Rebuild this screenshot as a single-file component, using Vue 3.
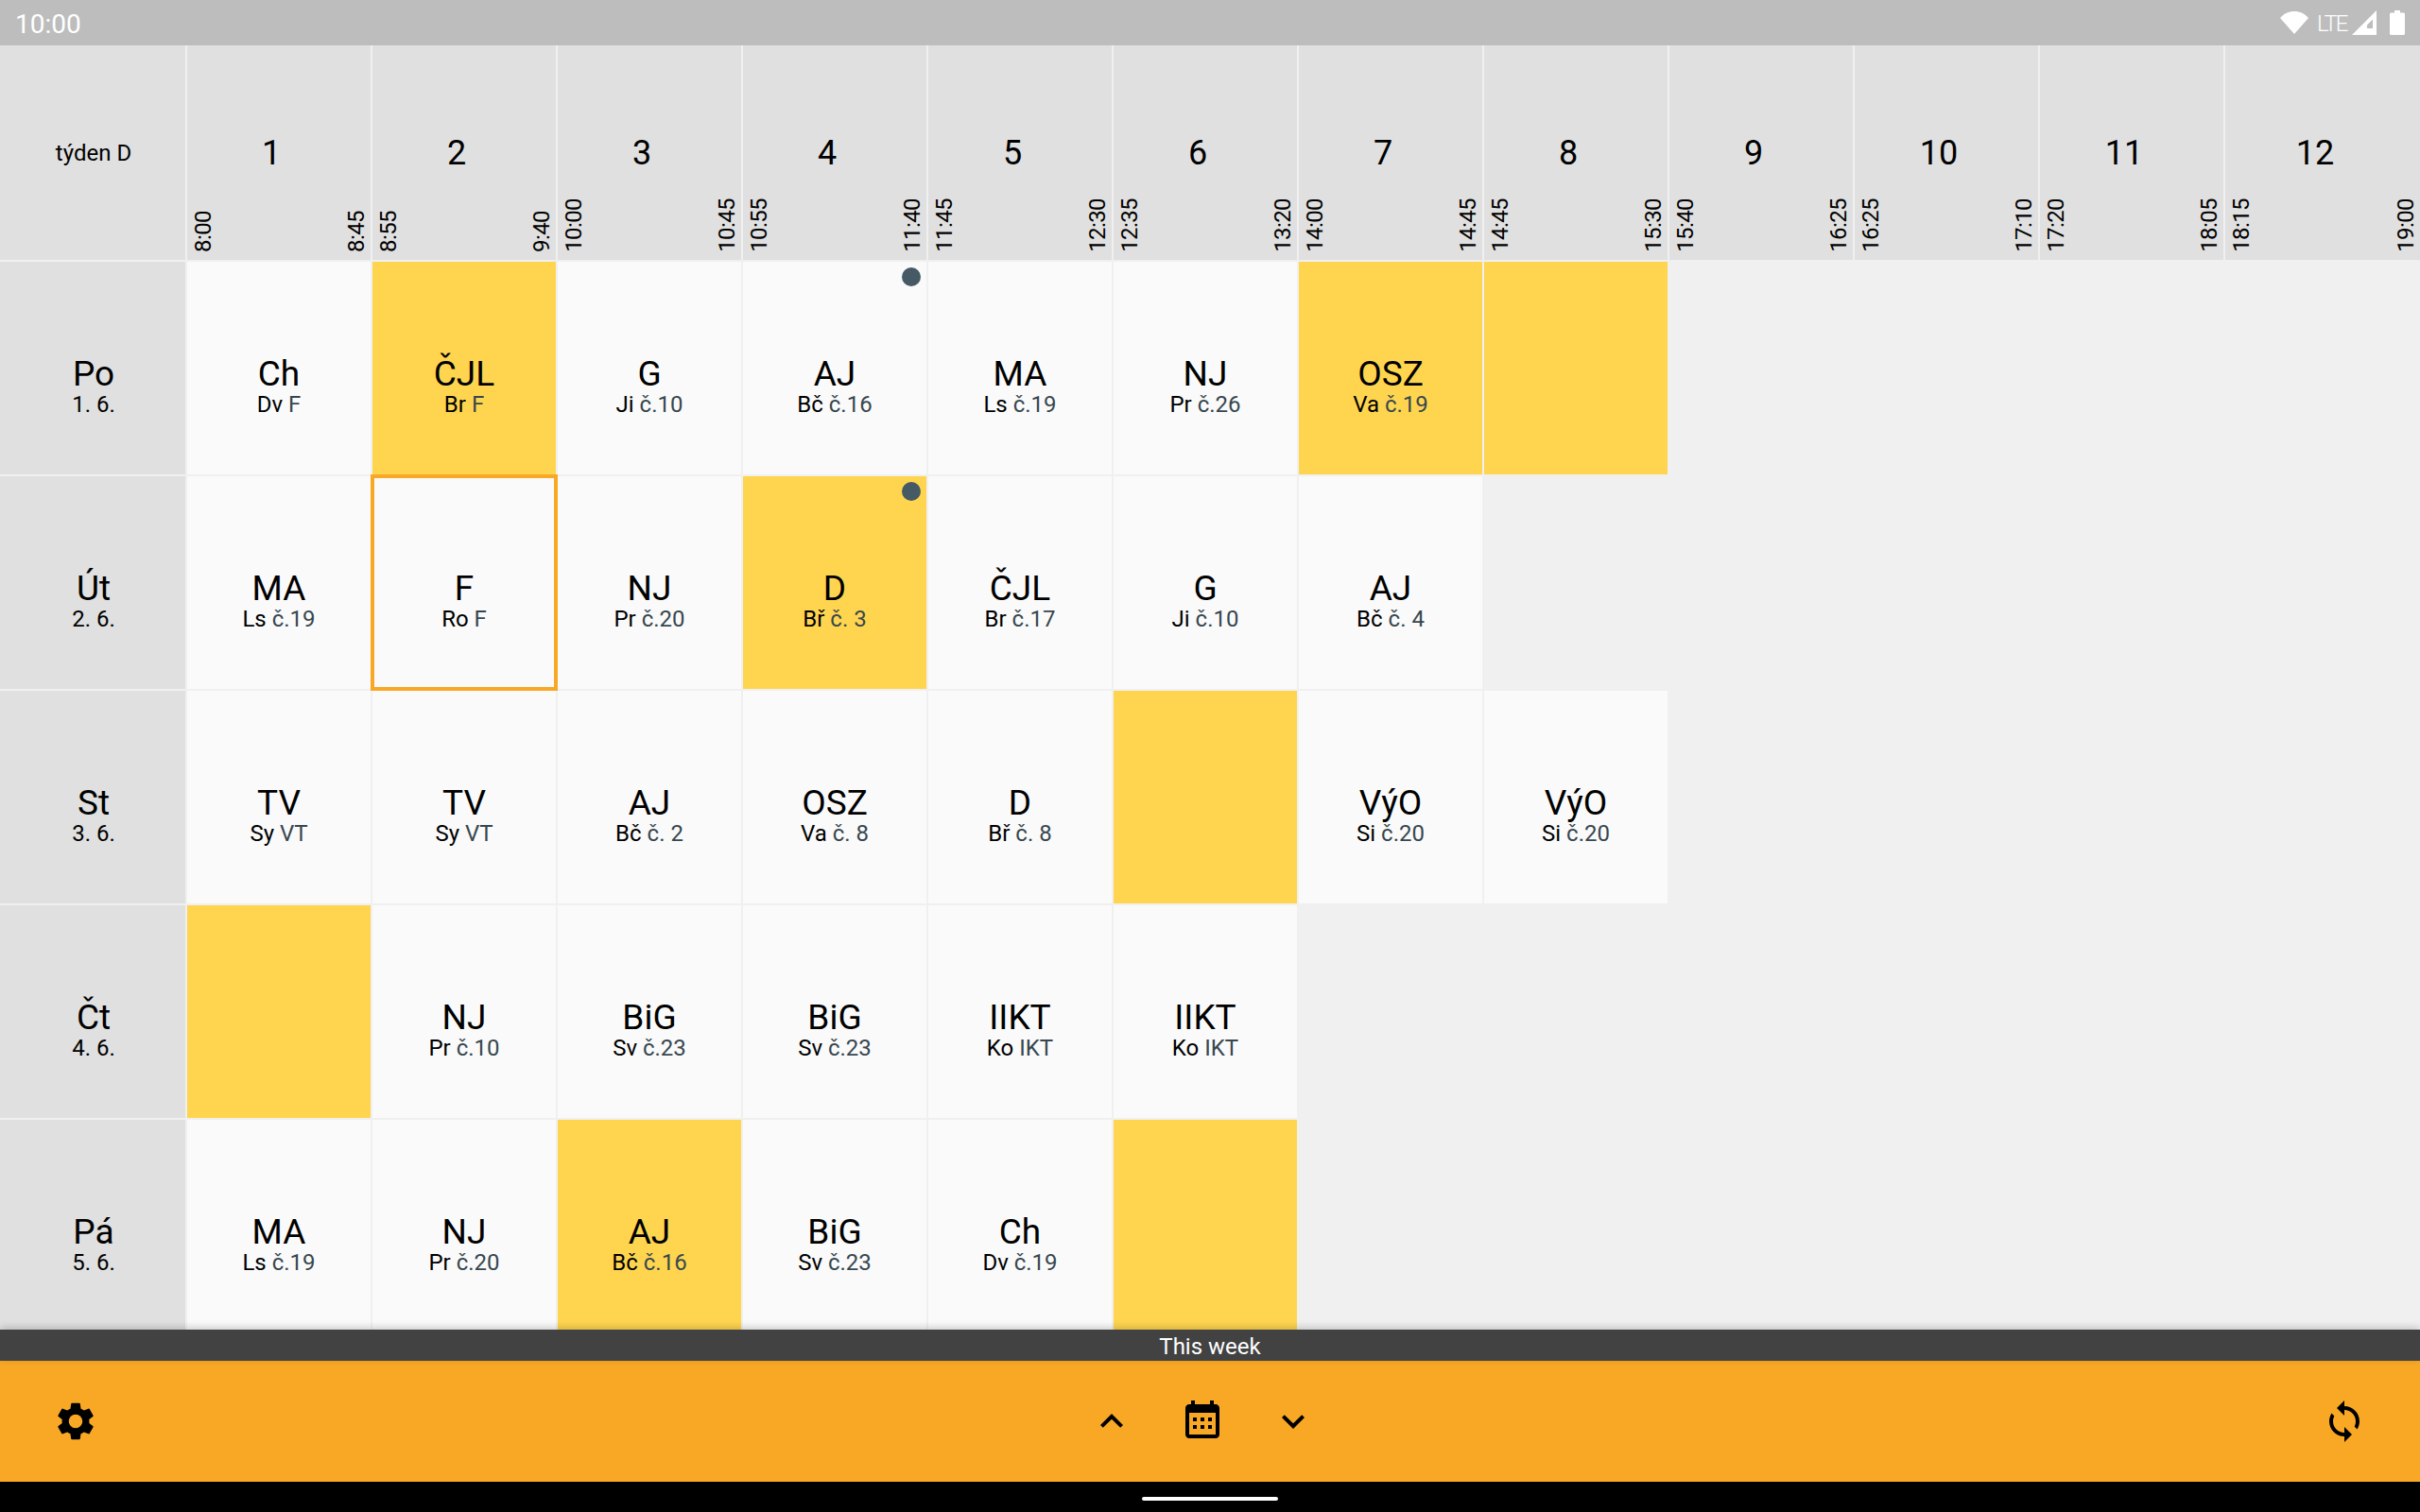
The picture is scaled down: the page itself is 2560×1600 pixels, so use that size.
<script setup>
const lessons = [
  { start: '8:00', end: '8:45' },
  { start: '8:55', end: '9:40' },
  { start: '10:00', end: '10:45' },
  { start: '10:55', end: '11:40' },
  { start: '11:45', end: '12:30' },
  { start: '12:35', end: '13:20' },
  { start: '14:00', end: '14:45' },
  { start: '14:45', end: '15:30' },
  { start: '15:40', end: '16:25' },
  { start: '16:25', end: '17:10' },
  { start: '17:20', end: '18:05' },
  { start: '18:15', end: '19:00' },
]

const c = (subject, teacher, room, extra = {}) => ({ subject, teacher, room, ...extra })
const free = { free: true }

const days = [
  {
    name: 'Po',
    date: '1. 6.',
    cells: [
      c('Ch', 'Dv', 'F'),
      c('ČJL', 'Br', 'F', { changed: true }),
      c('G', 'Ji', 'č.10'),
      c('AJ', 'Bč', 'č.16', { note: true }),
      c('MA', 'Ls', 'č.19'),
      c('NJ', 'Pr', 'č.26'),
      c('OSZ', 'Va', 'č.19', { changed: true }),
      free,
    ],
  },
  {
    name: 'Út',
    date: '2. 6.',
    cells: [
      c('MA', 'Ls', 'č.19'),
      c('F', 'Ro', 'F', { selected: true }),
      c('NJ', 'Pr', 'č.20'),
      c('D', 'Bř', 'č. 3', { changed: true, note: true }),
      c('ČJL', 'Br', 'č.17'),
      c('G', 'Ji', 'č.10'),
      c('AJ', 'Bč', 'č. 4'),
    ],
  },
  {
    name: 'St',
    date: '3. 6.',
    cells: [
      c('TV', 'Sy', 'VT'),
      c('TV', 'Sy', 'VT'),
      c('AJ', 'Bč', 'č. 2'),
      c('OSZ', 'Va', 'č. 8'),
      c('D', 'Bř', 'č. 8'),
      free,
      c('VýO', 'Si', 'č.20'),
      c('VýO', 'Si', 'č.20'),
    ],
  },
  {
    name: 'Čt',
    date: '4. 6.',
    cells: [
      free,
      c('NJ', 'Pr', 'č.10'),
      c('BiG', 'Sv', 'č.23'),
      c('BiG', 'Sv', 'č.23'),
      c('IIKT', 'Ko', 'IKT'),
      c('IIKT', 'Ko', 'IKT'),
    ],
  },
  {
    name: 'Pá',
    date: '5. 6.',
    cells: [
      c('MA', 'Ls', 'č.19'),
      c('NJ', 'Pr', 'č.20'),
      c('AJ', 'Bč', 'č.16', { changed: true }),
      c('BiG', 'Sv', 'č.23'),
      c('Ch', 'Dv', 'č.19'),
      free,
    ],
  },
]
</script>

<template>
  <div class="screen">
    <div class="status-bar">
      <span class="clock">10:00</span>
      <div class="status-icons">
        <svg class="ic-wifi" width="30" height="24" viewBox="0 0 30 24">
          <path d="M15 24L0 7C4 2.500 9 0 15 0s11 2.500 15 7z" fill="#fff" />
        </svg>
        <span class="lte">LTE</span>
        <svg class="ic-signal" width="26" height="26" viewBox="0 0 26 26">
          <path fill-rule="evenodd" d="M0 26L26 0v26zM16 19h6V9.500l-6 6z" fill="#fff" />
        </svg>
        <svg class="ic-battery" width="16" height="26" viewBox="0 0 16 26">
          <path d="M5 0h6v2.500h3.500c.8 0 1.500.7 1.500 1.500v20.500c0 .8-.7 1.500-1.500 1.500h-13C.7 26 0 25.300 0 24.500V4c0-.8.7-1.500 1.500-1.500H5z" fill="#fff" />
        </svg>
      </div>
    </div>

    <div class="table">
      <div class="row head-row">
        <div class="day-cell week-label">týden D</div>
        <div v-for="(l, i) in lessons" :key="i" class="head-cell">
          <span class="head-num">{{ i + 1 }}</span>
          <div class="head-times">
            <span class="time">{{ l.start }}</span>
            <span class="time">{{ l.end }}</span>
          </div>
        </div>
      </div>

      <div v-for="day in days" :key="day.name" class="row">
        <div class="day-cell day-name">
          <span class="big">{{ day.name }}</span>
          <span class="small">{{ day.date }}</span>
        </div>
        <div
          v-for="(cell, i) in day.cells"
          :key="i"
          class="cell"
          :class="{ changed: cell.changed || cell.free, selected: cell.selected }"
        >
          <span v-if="cell.note" class="note-dot"></span>
          <template v-if="!cell.free">
            <span class="big">{{ cell.subject }}</span>
            <span class="small">{{ cell.teacher }} <span class="room">{{ cell.room }}</span></span>
          </template>
        </div>
      </div>
    </div>

    <div class="week-bar">This week</div>

    <div class="bottom-bar">
      <button class="icon-btn">
        <svg width="48" height="48" viewBox="0 0 24 24"><path d="M19.14 12.94c.04-.3.06-.61.06-.94 0-.32-.02-.64-.07-.94l2.03-1.58c.18-.14.23-.41.12-.61l-1.92-3.32c-.12-.22-.37-.29-.59-.22l-2.39.96c-.5-.38-1.03-.7-1.62-.94l-.36-2.54c-.04-.24-.24-.41-.48-.41h-3.84c-.24 0-.43.17-.47.41l-.36 2.54c-.59.24-1.13.57-1.62.94l-2.39-.96c-.22-.08-.47 0-.59.22L2.74 8.87c-.12.21-.08.47.12.61l2.03 1.58c-.05.3-.09.63-.09.94s.02.64.07.94l-2.03 1.58c-.18.14-.23.41-.12.61l1.92 3.32c.12.22.37.29.59.22l2.39-.96c.5.38 1.03.7 1.62.94l.36 2.54c.05.24.24.41.48.41h3.84c.24 0 .44-.17.47-.41l.36-2.54c.59-.24 1.13-.56 1.62-.94l2.39.96c.22.08.47 0 .59-.22l1.92-3.32c.12-.22.07-.47-.12-.61l-2.01-1.58zM12 15.6c-1.98 0-3.6-1.62-3.6-3.6s1.62-3.6 3.6-3.6 3.6 1.62 3.6 3.6-1.62 3.6-3.6 3.6z" /></svg>
      </button>
      <div class="week-nav">
        <button class="icon-btn">
          <svg width="48" height="48" viewBox="0 0 24 24"><path d="M12 8l-6 6 1.410 1.410L12 10.830l4.590 4.580L18 14z" /></svg>
        </button>
        <button class="icon-btn calendar">
          <svg width="48" height="48" viewBox="0 0 24 24"><path fill-rule="evenodd" d="M19 4h-1V2h-2v2H8V2H6v2H5C3.900 4 3 4.900 3 6v14c0 1.100.9 2 2 2h14c1.100 0 2-.9 2-2V6c0-1.100-.9-2-2-2zM19 20H5V8.500h14z" /><path d="M7 11h2v2H7zm4 0h2v2h-2zm4 0h2v2h-2zM7 15h2v2H7zm4 0h2v2h-2zm4 0h2v2h-2z" /></svg>
        </button>
        <button class="icon-btn">
          <svg width="48" height="48" viewBox="0 0 24 24"><path d="M16.590 8.590L12 13.170 7.410 8.590 6 10l6 6 6-6z" /></svg>
        </button>
      </div>
      <button class="icon-btn">
        <svg width="48" height="48" viewBox="0 0 24 24"><path d="M12 4V1L8 5l4 4V6c3.310 0 6 2.690 6 6 0 1.010-.25 1.970-.7 2.800l1.460 1.460C19.540 15.030 20 13.570 20 12c0-4.420-3.580-8-8-8zm0 14c-3.310 0-6-2.690-6-6 0-1.010.25-1.970.7-2.800L5.240 7.740C4.460 8.970 4 10.430 4 12c0 4.420 3.580 8 8 8v3l4-4-4-4v3z" /></svg>
      </button>
    </div>

    <div class="nav-bar"><span class="home-pill"></span></div>
  </div>
</template>

<style>
html, body {
  margin: 0;
  background: #f0f0f0;
}
</style>

<style scoped>
.screen {
  width: 2560px;
  height: 1600px;
  display: flex;
  flex-direction: column;
  overflow: hidden;
  font-family: Roboto, "Liberation Sans", sans-serif;
  background: #f0f0f0;
  color: #000;
}

.status-bar {
  flex: 0 0 48px;
  display: flex;
  justify-content: space-between;
  align-items: center;
  padding: 0 16px;
  background: #bdbdbd;
  color: #fff;
}

.clock {
  font-size: 28px;
  padding-top: 2px;
}

.status-icons {
  display: flex;
  align-items: center;
}

.lte {
  margin-left: 9px;
  margin-top: 2px;
  width: 32px;
  font-size: 24px;
  font-weight: 300;
  letter-spacing: -2px;
  white-space: nowrap;
}

.ic-signal {
  margin-left: 5px;
}

.ic-battery {
  margin-left: 14px;
}

.table {
  flex: 1 1 0;
  min-height: 0;
  display: flex;
  flex-direction: column;
  gap: 2px;
  overflow: hidden;
}

.row {
  flex: 0 0 225px;
  display: flex;
  gap: 2px;
}

.head-row {
  flex-basis: 227px;
}

.day-cell {
  flex: 0 0 196px;
  background: #e0e0e0;
  display: flex;
  flex-direction: column;
  align-items: center;
  justify-content: center;
  padding-left: 2px;
  box-sizing: border-box;
}

.week-label {
  font-size: 24px;
}

.day-name,
.cell {
  padding-top: 37px;
  box-sizing: border-box;
}

.head-cell {
  flex: 0 0 194px;
  background: #e0e0e0;
  display: grid;
  position: relative;
}

.head-cell:last-child {
  flex-basis: 206px;
}

.head-num {
  grid-area: 1 / 1;
  justify-self: center;
  align-self: center;
  padding-right: 16px;
  font-size: 36px;
}

.head-times {
  grid-area: 1 / 1;
  display: flex;
  justify-content: space-between;
  align-items: flex-end;
  padding: 0 2px 8px 4px;
}

.time {
  writing-mode: vertical-rl;
  transform: rotate(180deg);
  font-size: 24px;
  line-height: 26px;
  letter-spacing: -0.6px;
}

.cell {
  flex: 0 0 194px;
  position: relative;
  background: #fafafa;
  display: flex;
  flex-direction: column;
  align-items: center;
  justify-content: center;
}

.cell.changed {
  background: #ffd54f;
}

.cell.selected {
  outline: 4px solid #f9a825;
  outline-offset: -2px;
}

.note-dot {
  position: absolute;
  top: 6px;
  right: 6px;
  width: 20px;
  height: 20px;
  border-radius: 50%;
  background: #455a64;
}

.big {
  font-size: 37px;
  line-height: 42px;
}

.small {
  font-size: 24px;
  line-height: 28px;
  margin-top: -3px;
}

.room {
  color: #37474f;
}

.week-bar {
  flex: 0 0 33px;
  min-height: 0;
  box-sizing: border-box;
  padding-top: 3px;
  position: relative;
  background: #424242;
  color: #fff;
  font-size: 24px;
  line-height: 30px;
  text-align: center;
  box-shadow: 0 -2px 8px rgba(0, 0, 0, 0.2);
}

.bottom-bar {
  flex: 0 0 128px;
  display: flex;
  justify-content: space-between;
  align-items: center;
  padding: 0 56px;
  background: #f9a825;
}

.week-nav {
  display: flex;
  align-items: center;
  gap: 48px;
  margin-right: 16px;
}

.icon-btn {
  width: 48px;
  height: 48px;
  padding: 0;
  border: none;
  background: none;
  display: block;
}

.icon-btn svg {
  display: block;
  fill: #000;
}

.calendar {
  margin-bottom: 4px;
}

.nav-bar {
  flex: 0 0 32px;
  box-sizing: border-box;
  padding-top: 4px;
  background: #000;
  display: flex;
  justify-content: center;
  align-items: center;
}

.home-pill {
  width: 144px;
  height: 4px;
  border-radius: 2px;
  background: #fff;
}
</style>
